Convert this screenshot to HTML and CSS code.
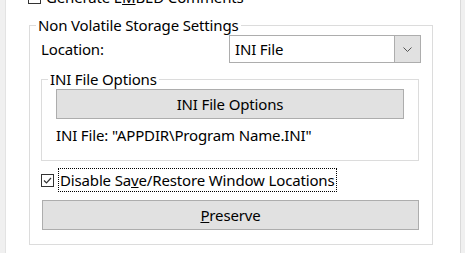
FILE: index.html
```html
<!DOCTYPE html>
<html>
<head>
<meta charset="utf-8">
<title>Non Volatile Storage Settings</title>
<link rel="stylesheet" href="styles.css">
</head>
<body>
<div class="window">
  <div class="edge-left"></div>
  <div class="panel">
    <div class="check-row top-row">
      <span class="checkbox"></span>
      <span class="check-label">Generate E<u>M</u>BED Comments</span>
    </div>
    <fieldset class="group outer">
      <legend>Non Volatile Storage Settings</legend>
      <div class="location-row">
        <span class="label">Location:</span>
        <div class="combo">
          <span class="combo-text">INI File</span>
          <span class="combo-btn">
            <svg width="9" height="5" viewBox="0 0 9 5"><path d="M0.5 0.5 L4.5 4.5 L8.5 0.5" fill="none" stroke="#555" stroke-width="1"/></svg>
          </span>
        </div>
      </div>
      <fieldset class="group inner">
        <legend>INI File Options</legend>
        <div class="button">INI File Options</div>
        <div class="ini-path">INI File: "APPDIR\Program Name.INI"</div>
      </fieldset>
      <div class="check-row">
        <span class="checkbox">
          <svg width="11" height="11" viewBox="0 0 11 11"><path d="M2 5.5 L4.5 8 L9 3" fill="none" stroke="#333" stroke-width="1.2"/></svg>
        </span>
        <span class="check-label focus">Disable Sa<u>v</u>e/Restore Window Locations</span>
      </div>
      <div class="button wide"><u>P</u>reserve</div>
    </fieldset>
  </div>
</div>
</body>
</html>
```

FILE: styles.css
```css
html, body {
  margin: 0;
  padding: 0;
}

body {
  background: #f0f0f0;
  font-family: "Noto Sans", "Open Sans", sans-serif;
  font-size: 15px;
  letter-spacing: -0.15px;
  color: #000;
  overflow: hidden;
}

.window {
  display: flex;
  height: 253px;
  overflow: hidden;
}

.edge-left {
  width: 5px;
  flex: none;
}

.panel {
  flex: none;
  width: 432px;
  background: #fff;
  border-left: 1px solid #e3e3e3;
  border-right: 1px solid #dadada;
  padding-left: 22px;
  box-sizing: content-box;
}

.panel > .group.outer {
  margin-left: 1px;
}

.check-row {
  display: flex;
  align-items: center;
  height: 24px;
}

.top-row {
  margin-top: -15px;
}

.checkbox {
  width: 11px;
  height: 11px;
  border: 1px solid #333;
  background: #fff;
  display: flex;
  align-items: center;
  justify-content: center;
  flex: none;
}

.checkbox svg {
  display: block;
}

.check-label {
  margin-left: 5px;
  line-height: 22px;
  white-space: nowrap;
}

.check-label.focus {
  margin-left: 4px;
  border: 1px dotted #000;
  padding: 0 1px;
}

.group {
  border: 1px solid #dcdcdc;
  margin: 0;
  min-width: 0;
  box-sizing: border-box;
}

.group legend {
  padding: 0 2px;
  line-height: 20px;
  white-space: nowrap;
}

.group.outer {
  width: 404px;
  margin-top: 6px;
  padding: 0 11px 14px 11px;
}

.group.outer > legend {
  margin-left: -5px;
}

.group.inner {
  width: 378px;
  margin-top: 6px;
  padding: 0 14px 15px 14px;
}

.group.inner > legend {
  margin-left: -8px;
}

.location-row {
  display: flex;
  align-items: center;
  height: 28px;
}

.label {
  flex: 1;
}

.combo {
  width: 192px;
  height: 28px;
  box-sizing: border-box;
  border: 1px solid #adadad;
  display: flex;
  background: #fff;
}

.combo-text {
  flex: 1;
  padding-left: 5px;
  line-height: 26px;
}

.combo-btn {
  width: 27px;
  box-sizing: border-box;
  border: 1px solid #adadad;
  background: #e1e1e1;
  display: flex;
  align-items: center;
  justify-content: center;
  margin: -1px -1px -1px 0;
  height: 28px;
}

.button {
  height: 30px;
  box-sizing: border-box;
  border: 1px solid #adadad;
  background: #e1e1e1;
  display: flex;
  align-items: center;
  justify-content: center;
}

.button.wide {
  margin-top: 8px;
  margin-left: 1px;
  width: 377px;
}

.ini-path {
  margin-top: 6px;
  line-height: 20px;
  white-space: nowrap;
}

.check-row:not(.top-row) {
  margin-top: 7px;
}
```
